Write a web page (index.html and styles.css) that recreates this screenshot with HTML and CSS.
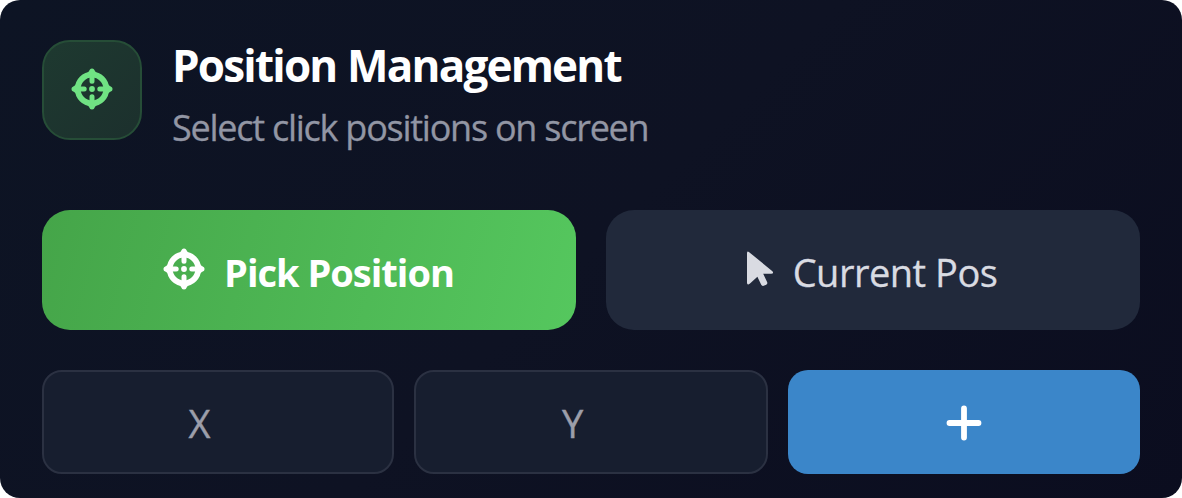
FILE: index.html
```
<!DOCTYPE html>
<html lang="en">
<head>
  <meta charset="UTF-8">
  <meta name="viewport" content="width=device-width, initial-scale=1.0">
  <title>Position Management</title>
  <link rel="stylesheet" href="styles.css">
</head>
<body>
  <svg class="sprite" xmlns="http://www.w3.org/2000/svg">
    <symbol id="crosshair" viewBox="0 0 42 42">
      <circle cx="21" cy="21" r="14.3" fill="none" stroke="currentColor" stroke-width="5.8"/>
      <path d="M21 3v10.2M21 28.8V39M3 21h10.2M28.8 21H39" fill="none" stroke="currentColor" stroke-width="5" stroke-linecap="round"/>
      <path d="M19 2L15.5 6h11L23 2ZM19 40L15.5 36h11L23 40ZM2 19L6 15.5v11L2 23ZM40 19L36 15.5v11L40 23Z" fill="currentColor"/>
      <circle cx="21" cy="21" r="2.9" fill="currentColor"/>
    </symbol>
  </svg>

  <div class="card">
    <div class="card-header">
      <div class="header-icon">
        <svg class="icon"><use href="#crosshair"/></svg>
      </div>
      <div class="header-text">
        <h2>Position Management</h2>
        <p>Select click positions on screen</p>
      </div>
    </div>

    <div class="button-row">
      <button class="btn btn-primary">
        <svg class="icon"><use href="#crosshair"/></svg>
        <span>Pick Position</span>
      </button>
      <button class="btn btn-secondary">
        <svg class="cursor" viewBox="0 0 28 38">
          <path d="M1 3.2Q1 .2 3.2 2.2L26.4 21.2Q28.2 23.6 25.2 23.8H17.2L21.2 32.2Q21.8 34 20.2 34.8L17.8 35.8Q16 36.4 15.2 34.8L11.4 26.8L4 33.6Q1 35.8 1 32.6Z" fill="currentColor"/>
        </svg>
        <span>Current Pos</span>
      </button>
    </div>

    <div class="coord-row">
      <input class="coord" type="text" placeholder="X">
      <input class="coord" type="text" placeholder="Y">
      <button class="btn-add" aria-label="Add">
        <svg class="plus" viewBox="0 0 36 36">
          <path d="M18 3.5v29M3.5 18h29" fill="none" stroke="currentColor" stroke-width="5.8" stroke-linecap="round"/>
        </svg>
      </button>
    </div>
  </div>
</body>
</html>
```
FILE: styles.css
```
* {
  box-sizing: border-box;
}

body {
  margin: 0;
  background: #ffffff;
  font-family: 'Segoe UI', 'Open Sans', 'Noto Sans', sans-serif;
}

.sprite {
  display: block;
  width: 0;
  height: 0;
}

.card {
  height: 498px;
  padding: 40px 42px 24px;
  border-radius: 20px;
  background: linear-gradient(135deg, #0d1424 0%, #0e1223 50%, #0b0d1f 100%);
}

.card-header {
  display: flex;
  gap: 30px;
  height: 100px;
  margin-bottom: 70px;
}

.header-icon {
  display: flex;
  align-items: center;
  justify-content: center;
  width: 100px;
  height: 100px;
  padding-bottom: 2px;
  border: 2px solid #264d37;
  border-radius: 28px;
  background: linear-gradient(135deg, #1e3930, #1c302d);
  color: #70e283;
}

.icon {
  width: 42px;
  height: 42px;
}

.header-text {
  white-space: nowrap;
}

h2 {
  margin: 0;
  font-size: 44px;
  font-weight: 700;
  line-height: 51px;
  letter-spacing: -1.8px;
  word-spacing: 1px;
  color: #ffffff;
}

p {
  margin: 12px 0 0;
  font-size: 36px;
  line-height: 50px;
  letter-spacing: -1.25px;
  -webkit-text-stroke: 0.3px;
  color: #9296a4;
}

.button-row {
  display: grid;
  grid-template-columns: 1fr 1fr;
  gap: 30px;
  margin-bottom: 40px;
}

.btn {
  display: flex;
  align-items: center;
  justify-content: center;
  height: 120px;
  padding: 0;
  border: none;
  border-radius: 28px;
  font-family: inherit;
  font-size: 38px;
  white-space: nowrap;
}

.btn span {
  padding-top: 3px;
}

.btn-primary {
  gap: 19px;
  padding-right: 1px;
  background: linear-gradient(105deg, #45a549, #55c75e);
  font-weight: 700;
  letter-spacing: -1px;
  color: #ffffff;
}

.btn-primary .icon {
  margin-bottom: 2px;
}

.btn-secondary {
  gap: 19px;
  padding-right: 3px;
  background: #21293b;
  letter-spacing: -0.5px;
  -webkit-text-stroke: 0.3px;
  color: #d9dbe2;
}

.cursor {
  width: 28px;
  height: 38px;
  margin-bottom: 2px;
}

.coord-row {
  display: grid;
  grid-template-columns: 352px 354px 352px;
  gap: 20px;
}

.coord {
  width: 100%;
  min-width: 0;
  height: 104px;
  padding: 2px 37px 0 0;
  border: 2px solid #2b3142;
  border-radius: 20px;
  background: #171e2f;
  font-family: inherit;
  font-size: 38px;
  text-align: center;
  color: #ffffff;
}

.coord::placeholder {
  color: #9c9eaa;
  opacity: 1;
  -webkit-text-stroke: 0.4px;
}

.btn-add {
  display: flex;
  align-items: center;
  justify-content: center;
  height: 104px;
  padding: 2px 1px 0 0;
  border: none;
  border-radius: 20px;
  background: #3b86c9;
  color: #ffffff;
}

.plus {
  width: 36px;
  height: 36px;
}
```
